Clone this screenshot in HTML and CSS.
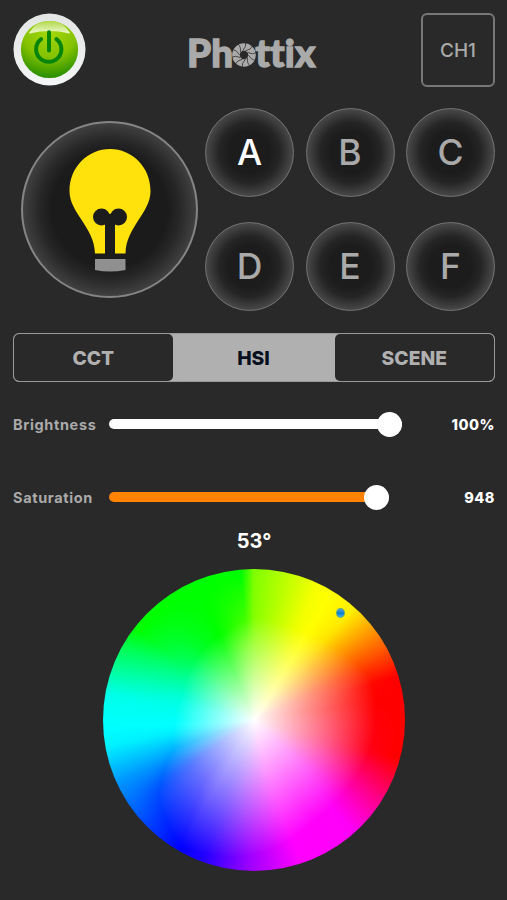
FILE: index.html
```html
<!DOCTYPE html>
<html lang="en">
<head>
<meta charset="utf-8">
<meta name="viewport" content="width=device-width">
<title>Phottix</title>
<link rel="stylesheet" href="styles.css">
</head>
<body>
<main class="app">
  <header class="top">
    <button class="power" aria-label="Power">
      <svg viewBox="0 0 74 74" width="73" height="73">
        <defs>
          <linearGradient id="rim" x1="0" y1="0" x2="0" y2="1"><stop offset="0" stop-color="#e2e5e4"/><stop offset="1" stop-color="#f4f5f6"/></linearGradient>
          <radialGradient id="green" cx=".5" cy=".15" r=".88"><stop offset="0" stop-color="#a6d90c"/><stop offset=".55" stop-color="#84c200"/><stop offset="1" stop-color="#1e8a00"/></radialGradient>
          <linearGradient id="gloss" x1="0" y1="0" x2="0" y2="1"><stop offset="0" stop-color="#b0d948"/><stop offset="1" stop-color="#effad0"/></linearGradient>
        </defs>
        <circle cx="37" cy="37" r="36.500" fill="url(#rim)"/>
        <circle cx="37" cy="37" r="29" fill="url(#green)"/>
        <path d="M17 19Q24 8 37 8Q50 8 57 19Q59 22 56 20.500Q37 16 18 20.500Q15 22 17 19Z" fill="url(#gloss)"/>
        <g fill="none" stroke="#07850b" stroke-width="4" stroke-linecap="round"><path d="M36.500 19.500V38"/><path d="M28.500 26.500A12.800 12.800 0 1 0 44 26.500"/></g>
      </svg>
    </button>
    <div class="logo"><span>Ph</span><svg class="shutter" viewBox="-12 -12 24 24" width="24" height="24">
        <circle r="8" fill="none" stroke="#aaa" stroke-width="7.600"/>
        <g fill="none" stroke="#292929" stroke-width=".7">
          <path id="b" d="M4.400 0Q7 5 11.500 5.500"/>
          <use href="#b" transform="rotate(36)"/><use href="#b" transform="rotate(72)"/><use href="#b" transform="rotate(108)"/><use href="#b" transform="rotate(144)"/><use href="#b" transform="rotate(180)"/><use href="#b" transform="rotate(216)"/><use href="#b" transform="rotate(252)"/><use href="#b" transform="rotate(288)"/><use href="#b" transform="rotate(324)"/>
        </g>
      </svg><span>ttix</span></div>
    <button class="channel">CH1</button>
  </header>

  <section class="presets">
    <button class="lamp" aria-label="Lamp">
      <svg viewBox="0 0 82 124" width="82" height="124">
        <path d="M41 0C63 0 81.500 18 81.500 42C81.500 64 57 78 56.500 104.500H26C25.500 78 .5 64 .5 42C.5 18 19 0 41 0Z" fill="#ffe10c"/>
        <g fill="#1c1c1c"><circle cx="32.500" cy="68" r="8.500"/><circle cx="49.500" cy="68" r="8.500"/><path d="M36 65H46V105H36Z"/></g>
        <path d="M26 110H56.500V121Q41 124 26 121Z" fill="#909090"/>
      </svg>
    </button>
    <div class="slots">
      <button class="slot active">A</button><button class="slot">B</button><button class="slot">C</button>
      <button class="slot">D</button><button class="slot">E</button><button class="slot">F</button>
    </div>
  </section>

  <nav class="tabs">
    <button class="tab">CCT</button><button class="tab selected">HSI</button><button class="tab">SCENE</button>
  </nav>

  <section class="sliders">
    <div class="row"><span class="label">Brightness</span><div class="track white"><i class="thumb"></i></div><span class="value">100%</span></div>
    <div class="row"><span class="label">Saturation</span><div class="track orange"><i class="thumb"></i></div><span class="value">948</span></div>
  </section>

  <section class="hue">
    <div class="degree">53°</div>
    <div class="wheel">
      <canvas id="wheel" width="302" height="302"></canvas>
      <i class="pin"></i>
    </div>
  </section>
</main>
<script src="wheel.js"></script>
</body>
</html>
```
FILE: styles.css
```css
* { box-sizing: border-box; }
body { margin: 0; background: #292929; font-family: Inter, "Liberation Sans", sans-serif; color: #aaa; }
button { margin: 0; padding: 0; border: 0; background: none; font: inherit; color: inherit; }
svg, canvas { display: block; }
.app { width: 507px; height: 900px; padding: 12px 12px 0 13px; overflow: hidden; }
.top { display: flex; justify-content: space-between; height: 75px; }
.power { width: 74px; height: 74px; padding-top: 1px; }
.logo { display: flex; align-items: center; width: 130px; height: 37px; margin: 22px 4px 0 0; font: 900 38.500px/37px Lato, sans-serif; letter-spacing: .2px; color: #aaa; -webkit-text-stroke: 1.300px #aaa; }
.shutter { flex: none; margin: 5px -1px 0 -1px; }
.channel { width: 74px; height: 74px; margin-top: 1px; border: 2px solid #777; border-radius: 6px; font-size: 19px; font-weight: 500; }
.presets { display: flex; justify-content: space-between; margin-top: 21px; height: 203px; }
.lamp { display: flex; justify-content: center; width: 177px; height: 177px; margin: 13px 0 0 8px; padding-top: 26px; border: 2px solid #858585; border-radius: 50%; background: radial-gradient(closest-side, #1b1b1b 67%, #272727 81%, #404040 100%); }
.slots { display: grid; grid-template-columns: repeat(3, 89px); grid-template-rows: repeat(2, 89px); gap: 25px 11.500px; }
.slot { border: 1.500px solid #737373; border-radius: 50%; background: radial-gradient(closest-side, #1c1c1c 48%, #252525 70%, #484848 100%); font-size: 35.500px; font-weight: 500; }
.slot.active { color: #fff; }
.tabs { display: grid; grid-template-columns: 158.500px 162px 1fr; width: 482px; height: 49px; margin-top: 22px; border: 1.500px solid #999; border-radius: 6px; background: #b0b0b0; overflow: hidden; }
.tab { border-radius: 5px; background: #292929; font-size: 19.300px; font-weight: 800; color: #b0b0b0; }
.tab.selected { background: #b0b0b0; color: #08101e; }
.sliders { display: grid; gap: 49px; padding-top: 30px; }
.row { display: flex; align-items: center; height: 24px; }
.label { width: 96px; font-size: 14.500px; font-weight: 700; letter-spacing: .65px; }
.track { display: flex; align-items: center; justify-content: flex-end; height: 10px; border-radius: 5px; }
.white { width: 293px; background: #fff; }
.orange { width: 280px; background: #ff8200; }
.thumb { width: 25px; height: 25px; border-radius: 50%; background: #fff; }
.value { margin-left: auto; font-size: 14.500px; font-weight: 800; letter-spacing: .5px; color: #fff; }
.hue { display: flex; flex-direction: column; align-items: center; padding-top: 20px; }
.degree { height: 24px; font-size: 20px; line-height: 24px; font-weight: 700; color: #fff; }
.wheel { position: relative; margin-top: 16px; width: 302px; height: 302px; border-radius: 50%; overflow: hidden; }
.pin { position: absolute; left: 233px; top: 39px; width: 9px; height: 10px; border-radius: 50%; border: 1px solid #65a977; background: linear-gradient(#569cda, #087fd0 55%, #4bafe8); }
```
FILE: wheel.js
```js
// Angles run counter-clockwise from the right-hand side of the wheel.
// One hue table for the rim and one for the middle; the two are blended by radius.
const rimStops = [[-15, 0], [17, 0], [34, 30], [48, 56], [65, 62], [90, 90], [95, 120], [142, 120], [150, 138], [170, 175], [190, 183], [205, 205], [219, 219], [240, 240], [250, 248], [269, 278], [288, 300], [312, 302], [328, 329], [345, 360]];
const innerStops = [[-15, -15], [6, -2], [22, 8], [38, 35], [52, 56], [65, 64], [90, 88], [112, 120], [125, 130], [140, 148], [165, 173], [188, 182], [205, 205], [216, 230], [230, 240], [250, 250], [268, 278], [284, 300], [318, 302], [345, 345]];
// Radius at which the hue becomes fully saturated.
const edgeStops = [[-15, 120], [0, 122], [20, 124], [45, 108], [65, 100], [90, 103], [110, 92], [135, 84], [160, 76], [180, 79], [200, 86], [220, 124], [240, 146], [260, 140], [280, 130], [300, 118], [320, 116], [345, 120]];
function at(stops, x) {
  for (let i = 1; i < stops.length; i++) {
    const [a, u] = stops[i - 1], [b, v] = stops[i];
    if (x <= b) return u + (v - u) * (x - a) / (b - a);
  }
  return stops[stops.length - 1][1];
}
function smooth(stops, x) {
  const wrap = (v) => v > 345 ? at(stops, v - 360) + 360 : v < -15 ? at(stops, v + 360) - 360 : at(stops, v);
  return (wrap(x - 4) + wrap(x - 2) + wrap(x) + wrap(x + 2) + wrap(x + 4)) / 5;
}
function channel(h, n) {
  const k = (n + h / 60) % 6;
  return 1 - Math.max(0, Math.min(k, 4 - k, 1));
}
const ctx = document.getElementById('wheel').getContext('2d');
const image = ctx.createImageData(302, 302);
for (let y = 0; y < 302; y++) {
  for (let x = 0; x < 302; x++) {
    const dx = x - 150.5, dy = 150.5 - y;
    let angle = Math.atan2(dy, dx) * 180 / Math.PI;
    if (angle < -15) angle += 360;
    const r = Math.hypot(dx, dy);
    const t = Math.max(0, Math.min(1, (r - 75) / 70));
    const hue = (smooth(innerStops, angle) * (1 - t) + at(rimStops, angle) * t + 360) % 360;
    const sat = Math.min(1, r / at(edgeStops, angle));
    const p = (y * 302 + x) * 4;
    [5, 3, 1].forEach((n, i) => { image.data[p + i] = 255 * (1 - sat * (1 - channel(hue, n))); });
    image.data[p + 3] = 255;
  }
}
ctx.putImageData(image, 0, 0);
```
